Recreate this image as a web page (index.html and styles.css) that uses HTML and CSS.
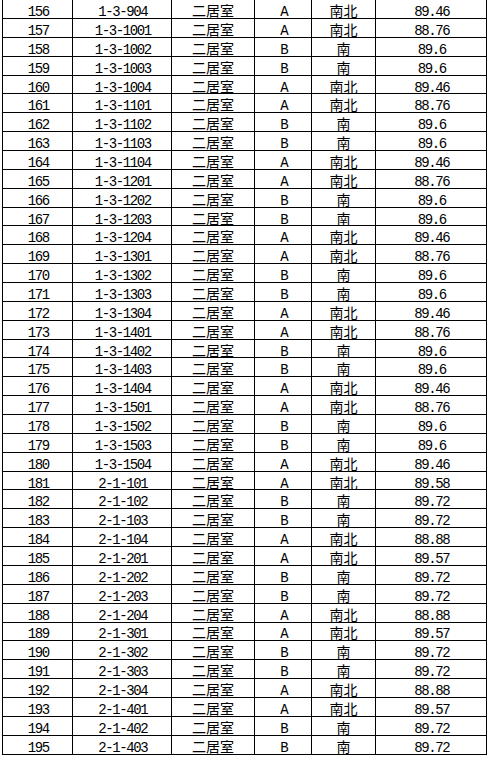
FILE: index.html
```html
<!DOCTYPE html>
<html lang="zh">
<head>
<meta charset="utf-8">
<title>房源表</title>
<link rel="stylesheet" href="styles.css">
</head>
<body>
<div class="sheet">
<div class="c n">156</div><div class="c n">1-3-904</div><div class="c z">二居室</div><div class="c n">A</div><div class="c z">南北</div><div class="c n">89.46</div>
<div class="c n">157</div><div class="c n">1-3-1001</div><div class="c z">二居室</div><div class="c n">A</div><div class="c z">南北</div><div class="c n">88.76</div>
<div class="c n">158</div><div class="c n">1-3-1002</div><div class="c z">二居室</div><div class="c n">B</div><div class="c z">南</div><div class="c n">89.6</div>
<div class="c n">159</div><div class="c n">1-3-1003</div><div class="c z">二居室</div><div class="c n">B</div><div class="c z">南</div><div class="c n">89.6</div>
<div class="c n">160</div><div class="c n">1-3-1004</div><div class="c z">二居室</div><div class="c n">A</div><div class="c z">南北</div><div class="c n">89.46</div>
<div class="c n">161</div><div class="c n">1-3-1101</div><div class="c z">二居室</div><div class="c n">A</div><div class="c z">南北</div><div class="c n">88.76</div>
<div class="c n">162</div><div class="c n">1-3-1102</div><div class="c z">二居室</div><div class="c n">B</div><div class="c z">南</div><div class="c n">89.6</div>
<div class="c n">163</div><div class="c n">1-3-1103</div><div class="c z">二居室</div><div class="c n">B</div><div class="c z">南</div><div class="c n">89.6</div>
<div class="c n">164</div><div class="c n">1-3-1104</div><div class="c z">二居室</div><div class="c n">A</div><div class="c z">南北</div><div class="c n">89.46</div>
<div class="c n">165</div><div class="c n">1-3-1201</div><div class="c z">二居室</div><div class="c n">A</div><div class="c z">南北</div><div class="c n">88.76</div>
<div class="c n">166</div><div class="c n">1-3-1202</div><div class="c z">二居室</div><div class="c n">B</div><div class="c z">南</div><div class="c n">89.6</div>
<div class="c n">167</div><div class="c n">1-3-1203</div><div class="c z">二居室</div><div class="c n">B</div><div class="c z">南</div><div class="c n">89.6</div>
<div class="c n">168</div><div class="c n">1-3-1204</div><div class="c z">二居室</div><div class="c n">A</div><div class="c z">南北</div><div class="c n">89.46</div>
<div class="c n">169</div><div class="c n">1-3-1301</div><div class="c z">二居室</div><div class="c n">A</div><div class="c z">南北</div><div class="c n">88.76</div>
<div class="c n">170</div><div class="c n">1-3-1302</div><div class="c z">二居室</div><div class="c n">B</div><div class="c z">南</div><div class="c n">89.6</div>
<div class="c n">171</div><div class="c n">1-3-1303</div><div class="c z">二居室</div><div class="c n">B</div><div class="c z">南</div><div class="c n">89.6</div>
<div class="c n">172</div><div class="c n">1-3-1304</div><div class="c z">二居室</div><div class="c n">A</div><div class="c z">南北</div><div class="c n">89.46</div>
<div class="c n">173</div><div class="c n">1-3-1401</div><div class="c z">二居室</div><div class="c n">A</div><div class="c z">南北</div><div class="c n">88.76</div>
<div class="c n">174</div><div class="c n">1-3-1402</div><div class="c z">二居室</div><div class="c n">B</div><div class="c z">南</div><div class="c n">89.6</div>
<div class="c n">175</div><div class="c n">1-3-1403</div><div class="c z">二居室</div><div class="c n">B</div><div class="c z">南</div><div class="c n">89.6</div>
<div class="c n">176</div><div class="c n">1-3-1404</div><div class="c z">二居室</div><div class="c n">A</div><div class="c z">南北</div><div class="c n">89.46</div>
<div class="c n">177</div><div class="c n">1-3-1501</div><div class="c z">二居室</div><div class="c n">A</div><div class="c z">南北</div><div class="c n">88.76</div>
<div class="c n">178</div><div class="c n">1-3-1502</div><div class="c z">二居室</div><div class="c n">B</div><div class="c z">南</div><div class="c n">89.6</div>
<div class="c n">179</div><div class="c n">1-3-1503</div><div class="c z">二居室</div><div class="c n">B</div><div class="c z">南</div><div class="c n">89.6</div>
<div class="c n">180</div><div class="c n">1-3-1504</div><div class="c z">二居室</div><div class="c n">A</div><div class="c z">南北</div><div class="c n">89.46</div>
<div class="c n">181</div><div class="c n">2-1-101</div><div class="c z">二居室</div><div class="c n">A</div><div class="c z">南北</div><div class="c n">89.58</div>
<div class="c n">182</div><div class="c n">2-1-102</div><div class="c z">二居室</div><div class="c n">B</div><div class="c z">南</div><div class="c n">89.72</div>
<div class="c n">183</div><div class="c n">2-1-103</div><div class="c z">二居室</div><div class="c n">B</div><div class="c z">南</div><div class="c n">89.72</div>
<div class="c n">184</div><div class="c n">2-1-104</div><div class="c z">二居室</div><div class="c n">A</div><div class="c z">南北</div><div class="c n">88.88</div>
<div class="c n">185</div><div class="c n">2-1-201</div><div class="c z">二居室</div><div class="c n">A</div><div class="c z">南北</div><div class="c n">89.57</div>
<div class="c n">186</div><div class="c n">2-1-202</div><div class="c z">二居室</div><div class="c n">B</div><div class="c z">南</div><div class="c n">89.72</div>
<div class="c n">187</div><div class="c n">2-1-203</div><div class="c z">二居室</div><div class="c n">B</div><div class="c z">南</div><div class="c n">89.72</div>
<div class="c n">188</div><div class="c n">2-1-204</div><div class="c z">二居室</div><div class="c n">A</div><div class="c z">南北</div><div class="c n">88.88</div>
<div class="c n">189</div><div class="c n">2-1-301</div><div class="c z">二居室</div><div class="c n">A</div><div class="c z">南北</div><div class="c n">89.57</div>
<div class="c n">190</div><div class="c n">2-1-302</div><div class="c z">二居室</div><div class="c n">B</div><div class="c z">南</div><div class="c n">89.72</div>
<div class="c n">191</div><div class="c n">2-1-303</div><div class="c z">二居室</div><div class="c n">B</div><div class="c z">南</div><div class="c n">89.72</div>
<div class="c n">192</div><div class="c n">2-1-304</div><div class="c z">二居室</div><div class="c n">A</div><div class="c z">南北</div><div class="c n">88.88</div>
<div class="c n">193</div><div class="c n">2-1-401</div><div class="c z">二居室</div><div class="c n">A</div><div class="c z">南北</div><div class="c n">89.57</div>
<div class="c n">194</div><div class="c n">2-1-402</div><div class="c z">二居室</div><div class="c n">B</div><div class="c z">南</div><div class="c n">89.72</div>
<div class="c n">195</div><div class="c n">2-1-403</div><div class="c z">二居室</div><div class="c n">B</div><div class="c z">南</div><div class="c n">89.72</div>
</div>
</body>
</html>
```
FILE: styles.css
```css
html, body {
  margin: 0;
  padding: 0;
  background: #ffffff;
}
body {
  color: #000000;
}
.sheet {
  display: grid;
  grid-template-columns: 71px 99px 83px 57px 64px 111px;
  grid-template-rows: 19px repeat(39, 18.87px);
  margin-left: 2px;
  width: 485px;
}
.c {
  box-sizing: border-box;
  display: flex;
  align-items: center;
  justify-content: center;
  border-right: 1px solid #000;
  border-bottom: 1px solid #000;
  line-height: 14px;
  font-size: 14px;
  white-space: nowrap;
}
.c:nth-child(6n+1) {
  border-left: 1px solid #000;
}
.n {
  font-family: "Liberation Mono", "DejaVu Sans Mono", monospace;
  letter-spacing: -1.4px;
  padding-left: 1.4px;
  padding-top: 6px;
}
.z {
  font-family: "Noto Sans CJK SC", "Noto Sans", sans-serif;
  padding-top: 2px;
}
```
